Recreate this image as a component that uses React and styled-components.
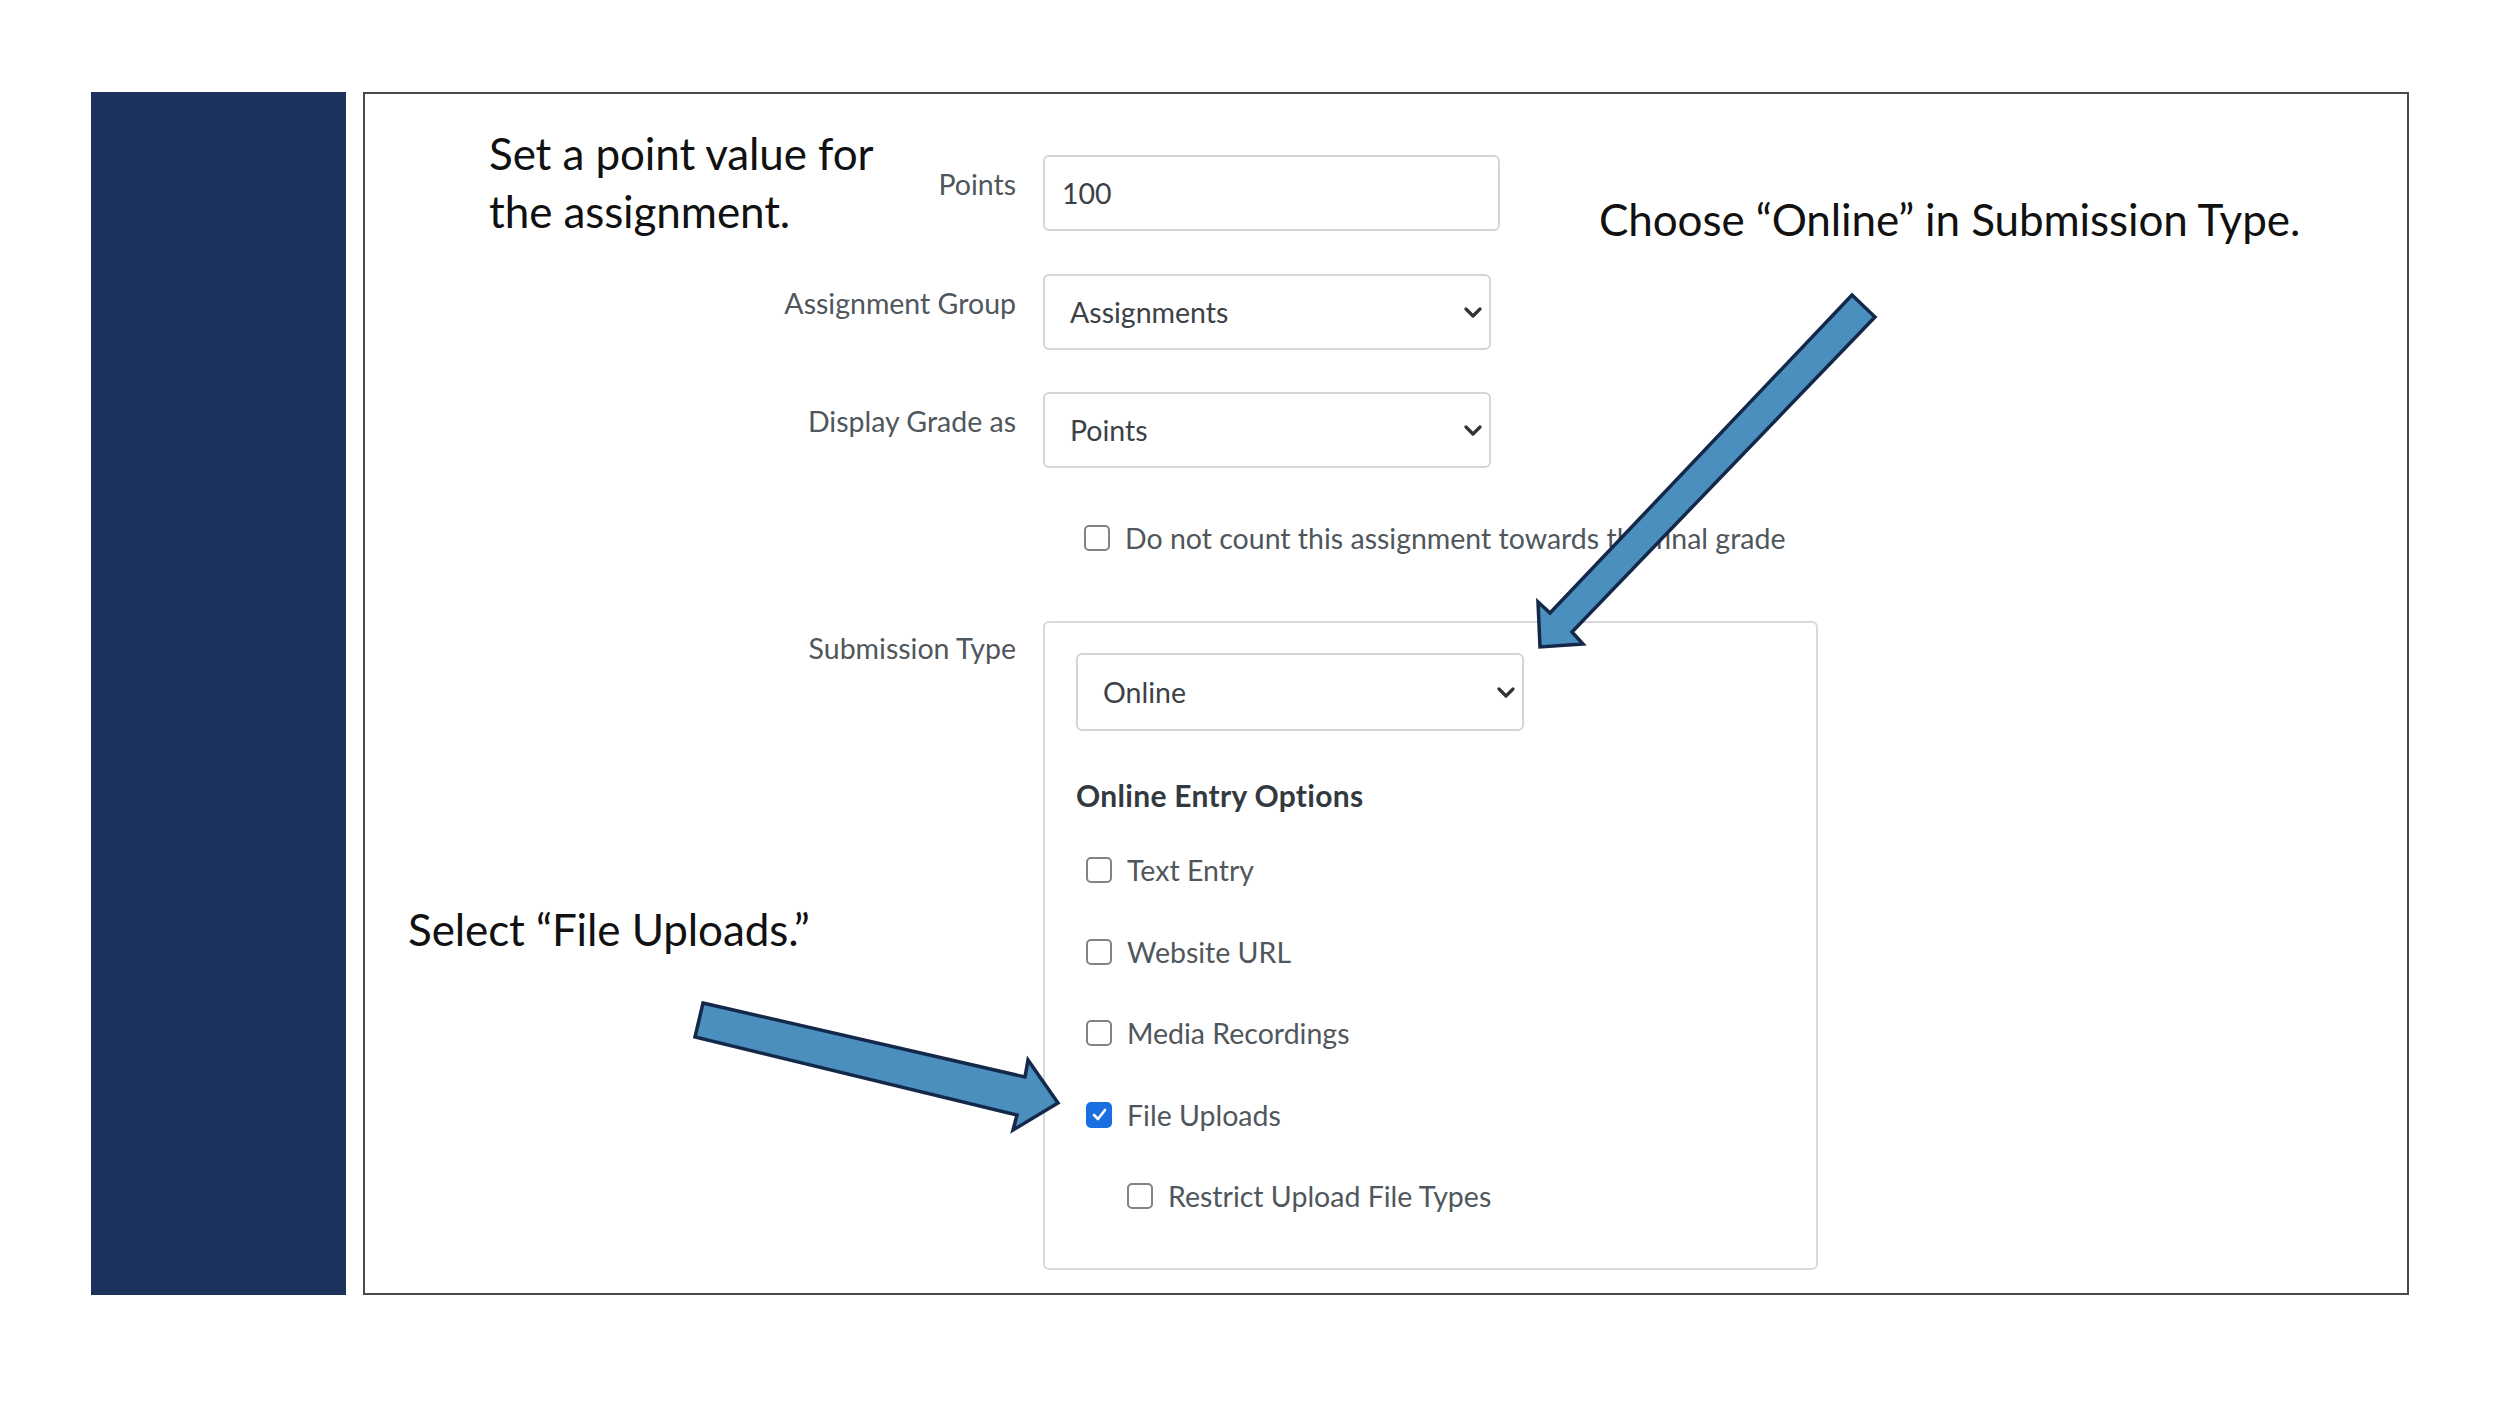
import styled, { createGlobalStyle } from "styled-components";

const GlobalStyle = createGlobalStyle`
  html, body {
    margin: 0;
    padding: 0;
    background: #ffffff;
  }
  body {
    font-family: Lato, "Noto Sans", sans-serif;
  }
`;

const Slide = styled.div`
  width: 2500px;
  height: 1406px;
  box-sizing: border-box;
  padding: 92px 0 0 91px;
  display: flex;
  align-items: flex-start;
  gap: 17px;
`;

const SideBar = styled.div`
  width: 255px;
  height: 1203px;
  background: #1c315c;
`;

const Frame = styled.div`
  position: relative;
  width: 2046px;
  height: 1203px;
  box-sizing: border-box;
  border: 2px solid #4a4a4a;
  padding-top: 30px;
  display: flex;
  flex-direction: column;
`;

const FormRow = styled.div`
  display: grid;
  grid-template-columns: 651px 1fr;
  column-gap: 27px;
  align-items: start;
  margin-top: ${(p) => p.$mt || 0}px;
`;

const Side = styled.div`
  display: flex;
  flex-direction: ${(p) => (p.$stack ? "column" : "row")};
  justify-content: ${(p) => (p.$stack ? "flex-start" : "space-between")};
  align-items: flex-start;
`;

const Label = styled.div`
  margin-left: auto;
  padding-top: ${(p) => p.$pt || 12}px;
  font-size: 28.5px;
  line-height: 34px;
  color: #50575c;
  white-space: nowrap;
`;

const Note = styled.div`
  margin-left: ${(p) => p.$ml || 0}px;
  margin-top: ${(p) => p.$mt || 0}px;
  font-size: 44px;
  line-height: ${(p) => p.$lh || 58}px;
  color: #111111;
  letter-spacing: -0.1px;
  white-space: nowrap;
`;

const Field = styled.div`
  display: flex;
  align-items: flex-start;
`;

const TextInput = styled.input`
  width: 457px;
  height: 76px;
  margin-top: ${(p) => p.$mt || 0}px;
  box-sizing: border-box;
  border: 2px solid #d3d7da;
  border-radius: 6px;
  padding: 0 17px;
  font-family: Lato, sans-serif;
  font-size: 28.5px;
  color: #3b4146;
  background: #fff;
  outline: none;
`;

const SelectBox = styled.div`
  width: 448px;
  height: ${(p) => p.$h || 76}px;
  box-sizing: border-box;
  border: 2px solid #d3d7da;
  border-radius: 6px;
  padding: 0 7px 0 25px;
  display: flex;
  align-items: center;
  justify-content: space-between;
  font-size: 28.5px;
  line-height: 34px;
  color: #3b4146;
  background: #fff;
`;

const CheckRow = styled.label`
  display: flex;
  align-items: center;
  gap: 15px;
  height: 34px;
  margin-left: ${(p) => p.$indent || 0}px;
  font-size: 28.5px;
  color: #50575c;
  white-space: nowrap;
`;

const Box = styled.span`
  width: 26px;
  height: 26px;
  box-sizing: border-box;
  border: 2px solid ${(p) => (p.$checked ? "#1a6fe0" : "#7f8488")};
  border-radius: 5px;
  background: ${(p) => (p.$checked ? "#1a6fe0" : "#fff")};
  display: flex;
  align-items: center;
  justify-content: center;
  flex-shrink: 0;
`;

const SubmissionBox = styled.div`
  width: 775px;
  box-sizing: border-box;
  border: 2px solid #d6dadd;
  border-radius: 6px;
  padding: 30px 0 55px 31px;
  display: flex;
  flex-direction: column;
`;

const SectionTitle = styled.div`
  margin-top: 46px;
  font-size: 30px;
  line-height: 36px;
  font-weight: 700;
  letter-spacing: 0.3px;
  color: #333a3f;
`;

const Options = styled.div`
  margin-top: 40px;
  padding-left: 10px;
  display: flex;
  flex-direction: column;
  gap: 47.5px;
`;

const ArrowLayer = styled.svg`
  position: absolute;
  left: 0;
  top: 0;
  width: 2042px;
  height: 1199px;
  pointer-events: none;
`;

const Chevron = () => (
  <svg width="18" height="11" viewBox="0 0 18 11">
    <path d="M2 2 L9 9 L16 2" fill="none" stroke="#2f3438" strokeWidth="3.2" strokeLinecap="round" strokeLinejoin="round" />
  </svg>
);

const Checkbox = ({ checked }) => (
  <Box $checked={checked}>
    {checked && (
      <svg width="15" height="13" viewBox="0 0 15 13">
        <path d="M2 7 L6 11 L13 2" fill="none" stroke="#fff" strokeWidth="2.6" strokeLinecap="round" strokeLinejoin="round" />
      </svg>
    )}
  </Box>
);

const Select = ({ value, height }) => (
  <SelectBox $h={height}>
    <span>{value}</span>
    <Chevron />
  </SelectBox>
);

const options = [
  { text: "Text Entry" },
  { text: "Website URL" },
  { text: "Media Recordings" },
  { text: "File Uploads", checked: true },
  { text: "Restrict Upload File Types", indent: 41 },
];

export default function App() {
  return (
    <>
      <GlobalStyle />
      <Slide>
        <SideBar />
        <Frame>
          <FormRow>
            <Side>
              <Note $ml={124}>
                Set a point value for
                <br />
                the assignment.
              </Note>
              <Label $pt={43}>Points</Label>
            </Side>
            <Field>
              <TextInput $mt={31} defaultValue="100" readOnly />
              <Note $ml={99} $mt={74} $lh={42}>
                Choose “Online” in Submission Type.
              </Note>
            </Field>
          </FormRow>

          <FormRow $mt={34}>
            <Side>
              <Label>Assignment Group</Label>
            </Side>
            <Select value="Assignments" />
          </FormRow>

          <FormRow $mt={42}>
            <Side>
              <Label>Display Grade as</Label>
            </Side>
            <Select value="Points" />
          </FormRow>

          <FormRow $mt={53}>
            <div />
            <CheckRow $indent={41}>
              <Checkbox />
              Do not count this assignment towards the final grade
            </CheckRow>
          </FormRow>

          <FormRow $mt={66}>
            <Side $stack>
              <Label $pt={10}>Submission Type</Label>
              <Note $ml={43} $mt={235}>
                Select “File Uploads.”
              </Note>
            </Side>
            <SubmissionBox>
              <Select value="Online" height={78} />
              <SectionTitle>Online Entry Options</SectionTitle>
              <Options>
                {options.map((o) => (
                  <CheckRow key={o.text} $indent={o.indent}>
                    <Checkbox checked={o.checked} />
                    {o.text}
                  </CheckRow>
                ))}
              </Options>
            </SubmissionBox>
          </FormRow>

          <ArrowLayer viewBox="0 0 2042 1199">
            <g transform="translate(-365 -94)" fill="#4a8fbd" stroke="#14284a" strokeWidth="3.5" strokeLinejoin="miter">
              <polygon points="1852,295 1875,317 1572,632 1583,644 1540,647 1538,602 1550,613" />
              <polygon points="703,1003 1025,1077 1028,1060 1058,1103 1013,1130 1017,1115 695,1037" />
            </g>
          </ArrowLayer>
        </Frame>
      </Slide>
    </>
  );
}
